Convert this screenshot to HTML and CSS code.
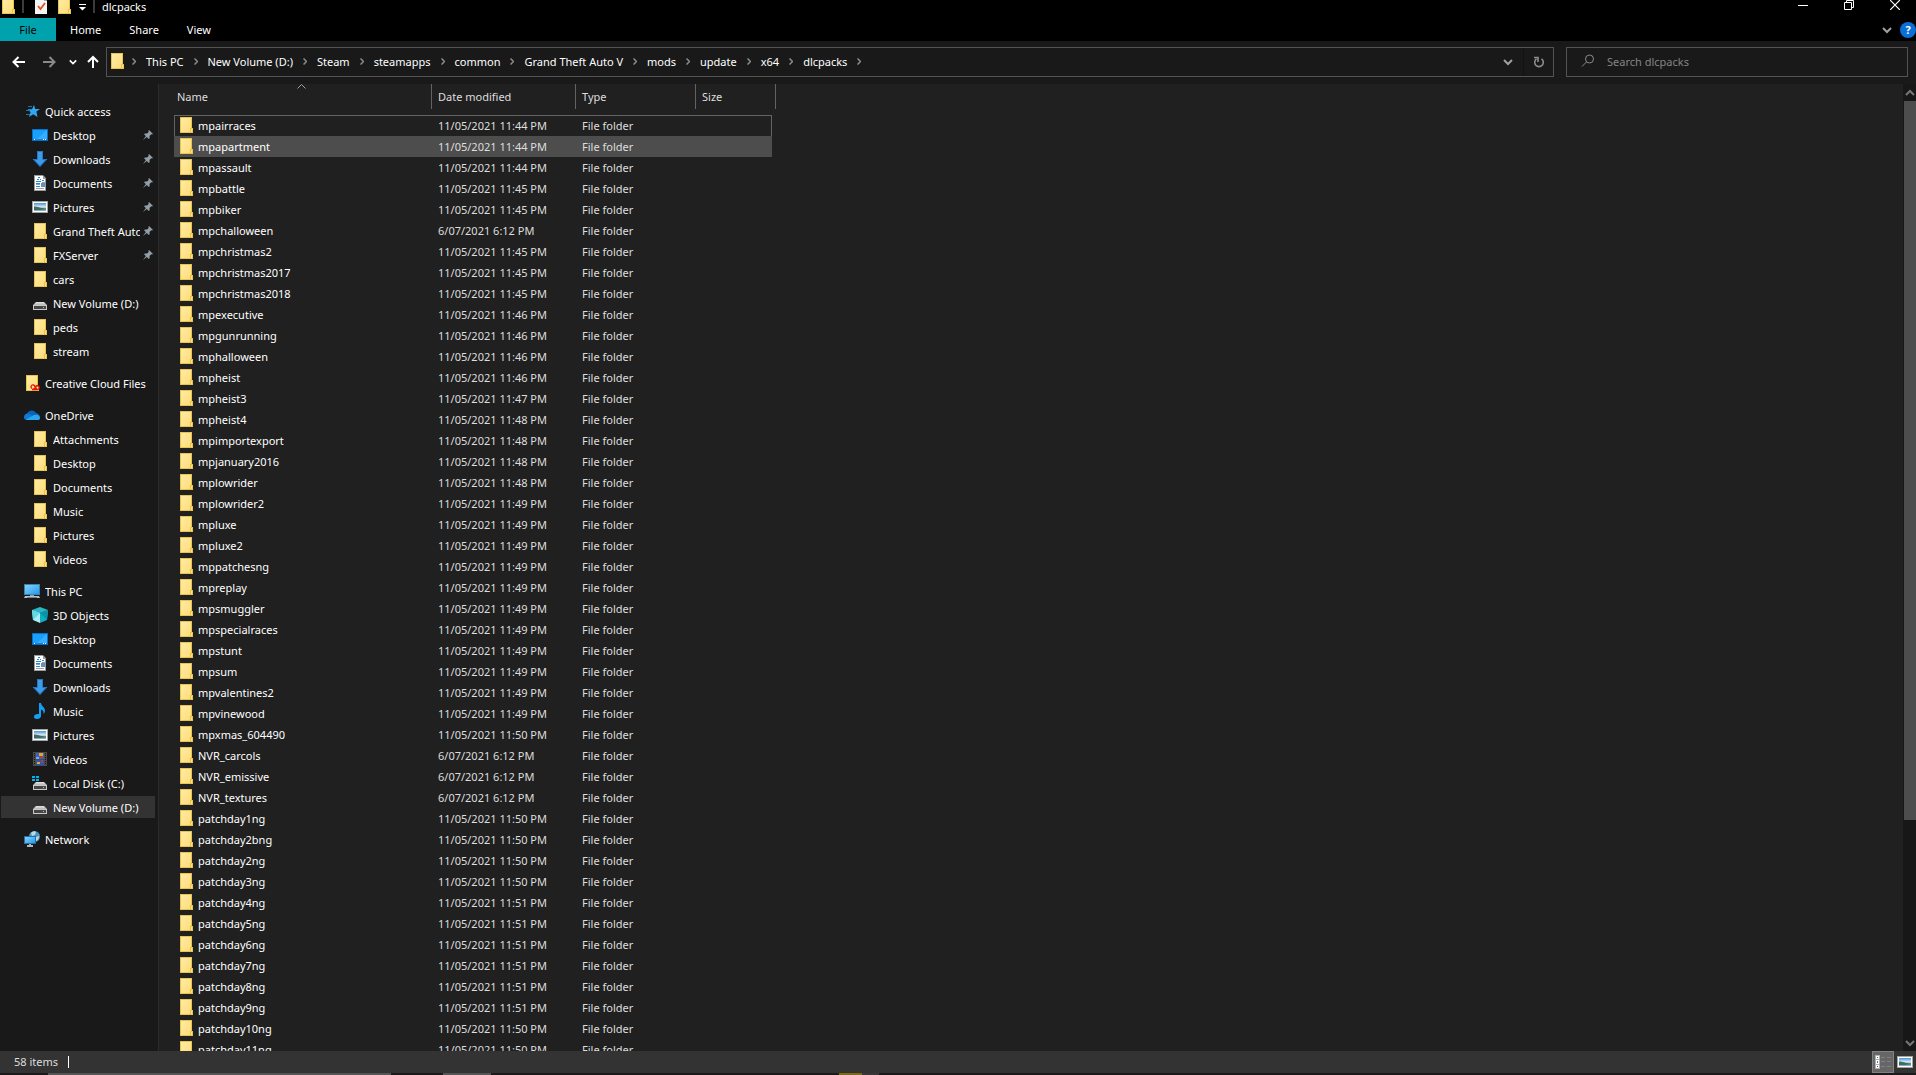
FILE: index.html
```
<!DOCTYPE html>
<html lang="en">
<head>
  <meta charset="UTF-8">
  <meta name="viewport" content="width=device-width, initial-scale=1.0">
  <title>dlcpacks</title>
  <link rel="stylesheet" href="styles.css">
</head>
<body>
  <!-- Icon sprites -->
  <svg class="sprites" width="0" height="0" aria-hidden="true">
    <defs>
      <linearGradient id="gFolder" x1="0" y1="0" x2="1" y2="1">
        <stop offset="0" stop-color="#ffeba6"/><stop offset="1" stop-color="#ffdc78"/>
      </linearGradient>
      <linearGradient id="gScreen" x1="0" y1="0" x2="1" y2="1">
        <stop offset="0" stop-color="#8ad1fb"/><stop offset="1" stop-color="#1e9cee"/>
      </linearGradient>
      <linearGradient id="gPhoto" x1="0" y1="0" x2="0" y2="1">
        <stop offset="0" stop-color="#4a93d8"/><stop offset="0.5" stop-color="#dcecf5"/>
        <stop offset="0.6" stop-color="#9fc0cf"/><stop offset="1" stop-color="#7fa9c4"/>
      </linearGradient>
      <linearGradient id="gDrive" x1="0" y1="0" x2="0" y2="1">
        <stop offset="0" stop-color="#e6e6e6"/><stop offset="1" stop-color="#b4b4b4"/>
      </linearGradient>
    </defs>
    <symbol id="folder" viewBox="0 0 16 16">
      <path d="M2 0h12v11h1v5H2z" fill="#e9c44c"/>
      <path d="M3 1h10v14H3z" fill="url(#gFolder)"/>
      <path d="M13 12h1v3h-1z" fill="#ffe08a"/>
      <path d="M12 11h1v4h-1z" fill="#e9c44c"/>
    </symbol>
    <symbol id="star" viewBox="0 0 16 16">
      <path d="M10 2l1.200 4H16l-3.600 2.600L13.500 14l-4.300-2.700L5 14l1.600-4.700L3.500 6.300H8z" fill="#2ea8f5"/>
      <path d="M4 3.500h4M2 7.500h4M2 11.500h4" stroke="#1575b5" fill="none"/>
    </symbol>
    <symbol id="desktop" viewBox="0 0 16 16">
      <path d="M0 2h16v12H0z" fill="#0a6fc0"/>
      <path d="M1 3h14v9H1z" fill="#18a0ff"/>
      <path d="M15 3v9H5z" fill="#37adff"/>
      <path d="M1 12h14v1H1z" fill="#0f84dc"/>
      <path d="M2 12h1v1H2zM11 12h1v1h-1zM13 12h1v1h-1z" fill="#fff"/>
    </symbol>
    <symbol id="downloads" viewBox="0 0 16 16">
      <path d="M5 0h6v8h4.500L8 16 .5 8H5z" fill="#2478c8"/>
      <path d="M6 1h4v8h3L8 14.500 3 9h3z" fill="#3d9bea"/>
    </symbol>
    <symbol id="documents" viewBox="0 0 16 16">
      <path d="M2 0h9l3 3v13H2z" fill="#9a9a9a"/>
      <path d="M3 1h8v3h2v11H3z" fill="#fff"/>
      <path d="M6 2h2v1H6zM5 4h2v1H5zM8 4h1v1H8zM4 6h5v1H4zM10 5h2v1h-2zM4 8h4v1H4zM4 11h4v1H4z" fill="#1d8bd8"/>
      <path d="M9 8h4v4H9z" fill="#5f93bb"/>
      <path d="M4 9h4v1H4zM10 7h3v1h-3zM4 13h8v1H4z" fill="#9c9c9c"/>
    </symbol>
    <symbol id="pictures" viewBox="0 0 16 16">
      <path d="M0 2h16v12H0z" fill="#a3a3a3"/>
      <path d="M1 3h14v10H1z" fill="#fff"/>
      <path d="M2 4h12v8H2z" fill="url(#gPhoto)"/>
      <path d="M2 7.500c3 0 6 1.500 12 2v1c-5 .500-8 .500-12 .500z" fill="#3f6d5c"/>
    </symbol>
    <symbol id="drive" viewBox="0 0 16 16">
      <path d="M4 7h8l3 3H1z" fill="url(#gDrive)"/>
      <path d="M1 10h14v5H1z" fill="#c9c9c9"/>
      <path d="M2 11h12v3H2z" fill="#474747"/>
      <path d="M11 12h1v1h-1z" fill="#4dff5b"/>
    </symbol>
    <symbol id="localdisk" viewBox="0 0 16 16">
      <use href="#drive"/>
      <path d="M0 1h3v2H0zM4 1h3v2H4zM0 4h3v2H0zM4 4h3v2H4z" fill="#00b4f0"/>
    </symbol>
    <symbol id="creative" viewBox="0 0 16 16">
      <use href="#folder"/>
      <path d="M8 13.500c-2-1-.800-4 1.500-3.500 2 .500 2 4.500 4 4.500s2.500-3.500 0-4c-2.500 0-2 4-5 4M8 14.500h6" fill="none" stroke="#e3170a" stroke-width="1.300"/>
    </symbol>
    <symbol id="onedrive" viewBox="0 0 16 16">
      <path d="M3 7c1-4 7-5 9-1 2 0 3 1 4 4H2z" fill="#0b63b8"/>
      <path d="M0 10c0-2 2-4 4.500-3.500L11 10l-8 3C1 13 0 12 0 10z" fill="#0f7ad6"/>
      <path d="M2 12.500L10 8c3-1 6 0 6 3 0 1.500-1 2-2 2H4c-1 0-1.500 0-2-.500z" fill="#2aa6ee"/>
    </symbol>
    <symbol id="pc" viewBox="0 0 16 16">
      <path d="M0 1h16v11H0z" fill="#3d80ad"/>
      <path d="M1 2h14v9H1z" fill="url(#gScreen)"/>
      <path d="M6 12h4v1H6z" fill="#8fa4b0"/>
      <path d="M1 13h14l1 2H0z" fill="#b5c3cc"/>
      <path d="M3 14h10v1H3z" fill="#6f8390"/>
    </symbol>
    <symbol id="objects" viewBox="0 0 16 16">
      <path d="M8 0l8 3-8 3-8-3z" fill="#2cb7c9"/>
      <path d="M0 3l8 3v10l-7-3z" fill="#a6eff5"/>
      <path d="M16 3L8 6v10l7-3z" fill="#12aebf"/>
      <path d="M8 6l8-3-1 10z" fill="#0795ab"/>
      <path d="M0 3l8 3-7 7z" fill="#63dbe6"/>
    </symbol>
    <symbol id="music" viewBox="0 0 16 16">
      <path d="M7 0h2c0 3 4 4 4 8 0 1-.500 2-1.500 3 .500-3-1-4-2.500-4.500V13c0 2-2 3-4 3s-3-1-3-2.300C2 12 4 11 5.500 11H7z" fill="#12a0f5"/>
    </symbol>
    <symbol id="videos" viewBox="0 0 16 16">
      <path d="M1 1h14v14H1z" fill="#4b4b4b"/>
      <path d="M2 2h1v1H2zM2 4h1v1H2zM2 6h1v1H2zM2 8h1v1H2zM2 10h1v1H2zM2 12h1v1H2zM13 2h1v1h-1zM13 4h1v1h-1zM13 6h1v1h-1zM13 8h1v1h-1zM13 10h1v1h-1zM13 12h1v1h-1z" fill="#161616"/>
      <path d="M4 2h8v6H4z" fill="#3a62c4"/>
      <path d="M4 9h8v5H4z" fill="#2d54b5"/>
      <path d="M7 2h4v3H7zM5 11h3v2H5z" fill="#dca92b"/>
      <path d="M8 5h3v2H8zM9 9h2v3H9z" fill="#b53e35"/>
      <path d="M4 6h3v2H4z" fill="#71a8e8"/>
    </symbol>
    <symbol id="network" viewBox="0 0 16 16">
      <circle cx="10.500" cy="5.500" r="5.500" fill="#4c94b8"/>
      <path d="M7 2c2-2 4-2 5-1l-1 3-3 1zM12 6l3-1c0 3-1 4-3 5z" fill="#b6dcea"/>
      <path d="M0 5h12v8H0z" fill="#2a6d9d"/>
      <path d="M1 6h10v6H1z" fill="url(#gScreen)"/>
      <path d="M5 13h2v1H5zM3 14h6v2H3z" fill="#a9bac5"/>
    </symbol>
    <symbol id="pin" viewBox="0 0 10 10">
      <path d="M6 0l4 4-1 .600-.800-.300L6.500 6l.200 2-.900.900-2-2L0 10l2.900-3.900L1 4.200l1-.800 2 .100L5.800 2 5.300 1z" fill="#93a0aa"/>
    </symbol>
    <symbol id="check" viewBox="0 0 16 16">
      <path d="M2 0h9l3 3v13H2z" fill="#f4f4f4"/>
      <path d="M11 0l3 3h-3z" fill="#a8a8a8"/>
      <path d="M5 8l2.500 3L12 5" fill="none" stroke="#e2511c" stroke-width="1.800"/>
    </symbol>
    <symbol id="chevron" viewBox="0 0 10 10">
      <path d="M1 3l4 4 4-4" fill="none" stroke="currentColor" stroke-width="2"/>
    </symbol>
  </svg>

  <div class="window">
    <header class="titlebar">
      <div class="quick-tools">
        <svg class="icon"><use href="#folder"/></svg>
        <span class="bar"></span>
        <button aria-label="Properties"><svg class="icon"><use href="#check"/></svg></button>
        <button aria-label="New folder"><svg class="icon"><use href="#folder"/></svg></button>
        <button class="customize" aria-label="Customize Quick Access Toolbar">
          <svg width="7" height="7" viewBox="0 0 7 7"><path d="M0 0h7v1H0zM0 3h7L3.500 6.500z" fill="#fff"/></svg>
        </button>
        <span class="bar"></span>
      </div>
      <h1>dlcpacks</h1>
      <div class="window-buttons">
        <button aria-label="Minimize"><svg width="10" height="10"><path d="M0 5h10v1H0z" fill="#fff"/></svg></button>
        <button aria-label="Restore"><svg width="10" height="10"><path d="M.5 2.500h7v7h-7zM2.500 2V.5h7v7H8" fill="none" stroke="#fff"/></svg></button>
        <button aria-label="Close"><svg width="10" height="10"><path d="M0 0l10 10M10 0L0 10" fill="none" stroke="#fff" stroke-width="1.200"/></svg></button>
      </div>
    </header>

    <nav class="ribbon">
      <button class="file">File</button>
      <button>Home</button>
      <button>Share</button>
      <button>View</button>
      <div class="ribbon-right">
        <button aria-label="Expand the Ribbon"><svg class="small"><use href="#chevron"/></svg></button>
        <button class="help" aria-label="Help">?</button>
      </div>
    </nav>

    <div class="navbar">
      <div class="history">
        <button aria-label="Back"><svg width="14" height="12"><path d="M13 6H2M6.500 1L1.500 6l5 5" fill="none" stroke="#fff" stroke-width="2"/></svg></button>
        <button aria-label="Forward"><svg width="14" height="12"><path d="M0 6h11M6.500 1l5 5-5 5" fill="none" stroke="#8a8a8a" stroke-width="2"/></svg></button>
        <button class="recent" aria-label="Recent locations"><svg width="8" height="8" viewBox="0 0 10 10"><use href="#chevron"/></svg></button>
        <button aria-label="Up"><svg width="12" height="14"><path d="M6 13V2M1 7l5-5 5 5" fill="none" stroke="#fff" stroke-width="2"/></svg></button>
      </div>
      <div class="address">
        <svg class="icon"><use href="#folder"/></svg>
        <div class="crumbs" id="crumbs"></div>
        <button class="drop" aria-label="Previous locations"><svg class="small"><use href="#chevron"/></svg></button>
        <button class="refresh" aria-label="Refresh">
          <svg width="12" height="12"><path d="M8.500 2.800a4.300 4.300 0 1 1-5 0M1 1.500h4V6" fill="none" stroke="#8c8c8c" stroke-width="1.600"/></svg>
        </button>
      </div>
      <label class="search">
        <svg width="14" height="14"><circle cx="8.500" cy="5" r="4" fill="none" stroke="#8a8a8a"/><path d="M5.500 8L1 12.500" stroke="#8a8a8a"/></svg>
        <input type="text" placeholder="Search dlcpacks" aria-label="Search dlcpacks">
      </label>
    </div>

    <div class="main">
      <aside class="sidebar" id="sidebar"></aside>
      <div class="list">
        <table>
          <colgroup>
            <col class="col-name"><col class="col-date"><col class="col-type"><col class="col-size">
          </colgroup>
          <thead>
            <tr>
              <th>Name<svg class="sort" width="9" height="5"><path d="M.5 4.500l4-4 4 4" fill="none" stroke="#a0a0a0"/></svg></th>
              <th>Date modified</th>
              <th>Type</th>
              <th>Size</th>
            </tr>
          </thead>
          <tbody id="files"></tbody>
        </table>
      </div>
      <div class="scrollbar">
        <svg class="small"><use href="#chevron" transform="rotate(180 5 5)"/></svg>
        <div class="track"><div class="thumb"></div></div>
        <svg class="small"><use href="#chevron"/></svg>
      </div>
    </div>

    <footer class="status">
      <span class="count">58 items</span>
      <div class="views">
        <button class="active" aria-label="Details">
          <svg width="16" height="14">
            <path d="M0 0h5v14H0z" fill="#b0b0b0"/>
            <path d="M1 1h3v3H1zM1 5h3v4H1zM1 10h3v3H1z" fill="#fff"/>
            <path d="M2 2h1v1H2z" fill="#2f7d4a"/><path d="M2 6h1v2H2z" fill="#2f7df0"/><path d="M2 11h1v1H2z" fill="#e01818"/>
            <path d="M6 2h4v1H6zM12 2h4v1h-4zM6 6h4v1H6zM12 6h4v1h-4zM6 11h4v1H6zM12 11h4v1h-4z" fill="#808080"/>
          </svg>
        </button>
        <button aria-label="Large icons"><svg class="icon"><use href="#pictures"/></svg></button>
      </div>
    </footer>
    <div class="taskbar">
      <i class="seg wide"></i><i class="seg short"></i><i class="seg notice"></i><i class="seg tail"></i>
    </div>
  </div>

  <script src="script.js"></script>
</body>
</html>
```
FILE: script.js
```
const crumbs = ['This PC', 'New Volume (D:)', 'Steam', 'steamapps', 'common', 'Grand Theft Auto V', 'mods', 'update', 'x64', 'dlcpacks'];

// icon, label, pinned
const groups = [
  { icon: 'star', label: 'Quick access', items: [
    ['desktop', 'Desktop', true],
    ['downloads', 'Downloads', true],
    ['documents', 'Documents', true],
    ['pictures', 'Pictures', true],
    ['folder', 'Grand Theft Auto V', true],
    ['folder', 'FXServer', true],
    ['folder', 'cars'],
    ['drive', 'New Volume (D:)'],
    ['folder', 'peds'],
    ['folder', 'stream']
  ] },
  { icon: 'creative', label: 'Creative Cloud Files', items: [] },
  { icon: 'onedrive', label: 'OneDrive', items: [
    ['folder', 'Attachments'],
    ['folder', 'Desktop'],
    ['folder', 'Documents'],
    ['folder', 'Music'],
    ['folder', 'Pictures'],
    ['folder', 'Videos']
  ] },
  { icon: 'pc', label: 'This PC', selected: 'New Volume (D:)', items: [
    ['objects', '3D Objects'],
    ['desktop', 'Desktop'],
    ['documents', 'Documents'],
    ['downloads', 'Downloads'],
    ['music', 'Music'],
    ['pictures', 'Pictures'],
    ['videos', 'Videos'],
    ['localdisk', 'Local Disk (C:)'],
    ['drive', 'New Volume (D:)']
  ] },
  { icon: 'network', label: 'Network', items: [] }
];

// folders grouped by the time they were modified
const files = [
  ['11/05/2021 11:44 PM', ['mpairraces', 'mpapartment', 'mpassault']],
  ['11/05/2021 11:45 PM', ['mpbattle', 'mpbiker']],
  ['6/07/2021 6:12 PM', ['mpchalloween']],
  ['11/05/2021 11:45 PM', ['mpchristmas2', 'mpchristmas2017', 'mpchristmas2018']],
  ['11/05/2021 11:46 PM', ['mpexecutive', 'mpgunrunning', 'mphalloween', 'mpheist']],
  ['11/05/2021 11:47 PM', ['mpheist3']],
  ['11/05/2021 11:48 PM', ['mpheist4', 'mpimportexport', 'mpjanuary2016', 'mplowrider']],
  ['11/05/2021 11:49 PM', ['mplowrider2', 'mpluxe', 'mpluxe2', 'mppatchesng', 'mpreplay', 'mpsmuggler', 'mpspecialraces', 'mpstunt', 'mpsum', 'mpvalentines2', 'mpvinewood']],
  ['11/05/2021 11:50 PM', ['mpxmas_604490']],
  ['6/07/2021 6:12 PM', ['NVR_carcols', 'NVR_emissive', 'NVR_textures']],
  ['11/05/2021 11:50 PM', ['patchday1ng', 'patchday2bng', 'patchday2ng', 'patchday3ng']],
  ['11/05/2021 11:51 PM', ['patchday4ng', 'patchday5ng', 'patchday6ng', 'patchday7ng', 'patchday8ng', 'patchday9ng']],
  ['11/05/2021 11:50 PM', ['patchday10ng', 'patchday11ng']]
];

const icon = (name) => `<svg class="icon"><use href="#${name}"/></svg>`;
const arrow = '<svg class="sep" width="4" height="7"><path d="M.5.5l3 3-3 3" fill="none" stroke="#8c8c8c" stroke-width="1.500"/></svg>';

document.getElementById('crumbs').innerHTML =
  arrow + crumbs.map((name) => `<a href="#">${name}</a>${arrow}`).join('');

document.getElementById('sidebar').innerHTML = groups.map((group) => `
  <div class="group">
    <a class="node root" href="#">${icon(group.icon)}<span>${group.label}</span></a>
    ${group.items.map(([name, label, pinned]) => `
      <a class="node ${group.selected === label ? 'selected' : ''}" href="#">
        ${icon(name)}<span>${label}</span>${pinned ? '<svg class="pin"><use href="#pin"/></svg>' : ''}
      </a>`).join('')}
  </div>`).join('');

const rows = files.flatMap(([date, names]) => names.map((name) => ({ name, date })));

document.getElementById('files').innerHTML = rows.map(({ name, date }, i) => `
  <tr class="${['focused', 'hovered'][i] || ''}">
    <td><div class="name">${icon('folder')}${name}</div></td>
    <td>${date}</td>
    <td>File folder</td>
    <td></td>
  </tr>`).join('');
```
FILE: styles.css
```
* {
  box-sizing: border-box;
}

body {
  margin: 0;
  background: #000;
  color: #fff;
  font-family: "Noto Sans", "Open Sans", sans-serif;
  font-size: 11px;
}

a {
  color: inherit;
  text-decoration: none;
}

button,
input {
  padding: 0;
  border: 0;
  background: none;
  color: inherit;
  font: inherit;
}

svg {
  display: block;
  flex: none;
}

.sprites {
  position: absolute;
}

.icon {
  width: 16px;
  height: 16px;
}

.small {
  width: 10px;
  height: 10px;
  color: #a0a0a0;
}

.window {
  display: flex;
  flex-direction: column;
  height: 100vh;
  overflow: hidden;
}

/* Title bar */
.titlebar {
  display: flex;
  flex: none;
  height: 18px;
  padding-bottom: 4px;
  overflow: hidden;
}

.quick-tools {
  display: flex;
  align-items: flex-end;
  gap: 7px;
  height: 14px;
}

.titlebar h1 {
  margin: 0 0 0 7px;
  font-size: 11px;
  font-weight: normal;
  line-height: 14px;
}

.bar {
  width: 2px;
  height: 13px;
  margin: 0 0 1px;
  background: #3c3c3c;
}

.quick-tools .bar:nth-child(2) {
  margin-right: 2px;
  margin-left: -1px;
}

.customize {
  height: 14px;
}

.window-buttons {
  display: flex;
  align-items: flex-start;
  margin-left: auto;
  margin-right: -2px;
}

.window-buttons button {
  display: flex;
  justify-content: center;
  width: 46px;
}

/* Ribbon tabs */
.ribbon {
  display: flex;
  flex: none;
  height: 23px;
}

.ribbon button {
  padding: 0 14px;
}

.ribbon .file {
  width: 56px;
  background: #00a3ad;
  color: #000;
}

.ribbon-right {
  display: flex;
  align-items: center;
  gap: 8px;
  margin-left: auto;
}

.ribbon-right button {
  padding: 0;
}

.ribbon .help {
  width: 16px;
  height: 16px;
  border-radius: 50%;
  background: #0a6fd6;
  font-weight: bold;
  line-height: 16px;
}

/* Address bar row */
.navbar {
  display: flex;
  flex: none;
  gap: 12px;
  padding: 6px 8px 7px 12px;
  background: #191919;
}

.history {
  display: flex;
  align-items: center;
  gap: 12px;
  width: 82px;
}

.history button:nth-child(2) {
  margin-left: 5px;
}

.history .recent {
  margin-right: -2px;
}

.address,
.search {
  display: flex;
  align-items: center;
  height: 30px;
  border: 1px solid #535353;
}

.address {
  flex: 1;
  padding-left: 2px;
}

.address > .icon {
  margin-bottom: 2px;
}

.crumbs {
  display: flex;
  flex: 1;
  align-items: center;
  gap: 10px;
  margin-left: 7px;
  padding-bottom: 2px;
}

.drop {
  width: 18px;
  margin-right: 2px;
}

.refresh {
  display: flex;
  align-items: center;
  justify-content: center;
  width: 30px;
  height: 28px;
  border-left: 1px solid #121212;
}

.search {
  gap: 12px;
  width: 342px;
  padding: 0 0 2px 14px;
}

.search input {
  flex: 1;
  outline: none;
}

.search input::placeholder {
  color: #858585;
}

/* Folder tree */
.main {
  display: flex;
  flex: 1;
  min-height: 0;
}

.sidebar {
  flex: none;
  width: 159px;
  padding: 15px 3px 0 1px;
  overflow: hidden;
  background: #191919;
  border-right: 1px solid #2b2b2b;
}

.group {
  margin-bottom: 8px;
}

.node {
  display: flex;
  align-items: center;
  gap: 5px;
  height: 24px;
  padding-left: 31px;
  border: solid transparent;
  border-width: 1px 0;
  background-clip: padding-box;
}

.node.root {
  padding-left: 23px;
}

.node span {
  flex: 1;
  min-width: 0;
  overflow: hidden;
  white-space: nowrap;
}

.node.selected {
  background-color: #333;
}

.pin {
  width: 10px;
  height: 10px;
  margin: 0 2px 0 -2px;
}

/* File list */
.list {
  flex: 1;
  padding-left: 15px;
  overflow: hidden;
  background: #202020;
}

table {
  border-collapse: separate;
  border-spacing: 0;
  table-layout: fixed;
  width: 602px;
}

.col-name {
  width: 258px;
}

.col-date {
  width: 144px;
}

.col-type {
  width: 120px;
}

.col-size {
  width: 80px;
}

th {
  position: relative;
  height: 25px;
  padding: 0 0 0 6px;
  border-right: 1px solid #636363;
  color: #dedede;
  font-weight: normal;
  text-align: left;
}

th:first-child {
  padding-left: 3px;
}

.sort {
  position: absolute;
  top: 0;
  left: 50%;
  margin-left: -6px;
}

tbody::before {
  content: "";
  display: block;
  height: 6px;
}

td {
  height: 21px;
  padding: 0 0 0 6px;
  color: #dedede;
}

td:last-child {
  border-right: 4px solid transparent;
  background-clip: padding-box;
}

.name {
  display: flex;
  align-items: center;
  gap: 4px;
  height: 21px;
  margin-left: -2px;
  color: #fff;
}

.name .icon {
  margin-bottom: 1px;
}

.focused td {
  box-shadow: inset 0 1px #636363;
}

.focused td:first-child {
  box-shadow: inset 1px 1px #636363;
}

.focused td:last-child {
  box-shadow: inset -1px 1px #636363;
}

.hovered td {
  background-color: #4d4d4d;
}

/* Scroll bar */
.scrollbar {
  display: flex;
  flex: none;
  flex-direction: column;
  align-items: center;
  width: 13px;
  padding: 4px 0 3px 1px;
  background: #171717;
}

.scrollbar .small {
  color: #777;
}

.track {
  flex: 1;
  width: 100%;
  margin: 3px 0;
}

.thumb {
  height: 77%;
  background: #4d4d4d;
}

/* Status bar */
.status {
  display: flex;
  flex: none;
  align-items: center;
  justify-content: space-between;
  height: 22px;
  padding: 0 2px 0 14px;
  background: #333;
  color: #dedede;
}

.count {
  padding-right: 10px;
  border-right: 1px solid #fff;
  line-height: 12px;
}

.views {
  display: flex;
  gap: 2px;
}

.views button {
  display: flex;
  align-items: center;
  justify-content: center;
  width: 18px;
  height: 22px;
}

.views .active {
  width: 22px;
  border: 1px solid #828282;
  background: #666;
}

/* Edge of the taskbar */
.taskbar {
  display: flex;
  flex: none;
  height: 2px;
  padding-left: 48px;
  background: #1c1a1b;
}

.seg {
  background: #555;
}

.wide {
  width: 343px;
}

.short {
  width: 48px;
  margin-left: 52px;
}

.notice {
  width: 23px;
  margin-left: 348px;
  background: #7a6c14;
}

.tail {
  width: 17px;
  background: #3a3738;
}
```
